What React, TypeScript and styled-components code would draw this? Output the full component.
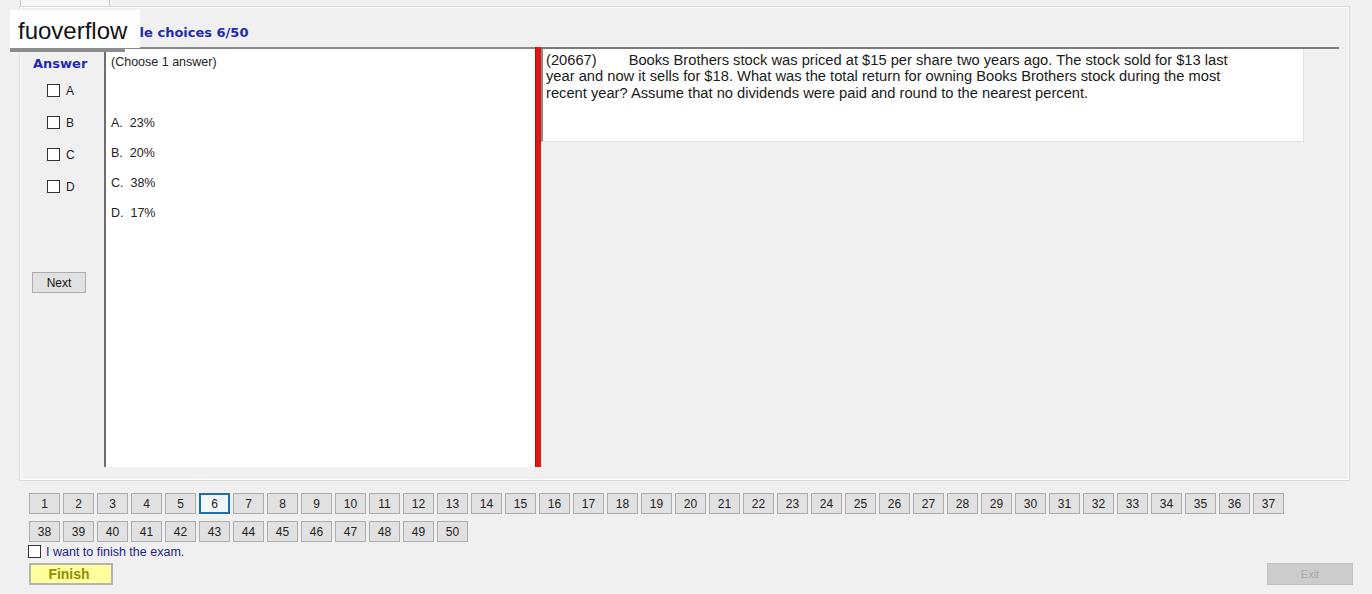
import styled, { createGlobalStyle } from "styled-components";

const GlobalStyle = createGlobalStyle`
  html, body {
    margin: 0;
    padding: 0;
    background: #f0f0f0;
  }
  * {
    box-sizing: border-box;
  }
`;

const Screen = styled.div`
  position: relative;
  width: 1372px;
  height: 594px;
  overflow: hidden;
  background: #f0f0f0;
  font-family: "Liberation Sans", Arial, sans-serif;
  color: #1a1a1a;
`;

const TabStrip = styled.div`
  height: 6px;
  padding-left: 20px;
  display: flex;
`;

const Tab = styled.div`
  width: 90px;
  height: 6px;
  border-left: 1px solid #c8c8c8;
  border-right: 1px solid #c8c8c8;
  background: #f6f6f6;
`;

const Frame = styled.div`
  margin-left: 19px;
  width: 1331px;
  height: 475px;
  border: 1px solid #d9d9d9;
  box-shadow: inset 1px 1px 0 #ffffff, inset -1px -1px 0 #ffffff;
  padding: 0 10px 13px 0;
  display: flex;
  flex-direction: column;
`;

const TitleRow = styled.div`
  height: 40px;
  padding-left: 73px;
  display: flex;
  align-items: flex-end;
  padding-bottom: 7px;
`;

const Title = styled.h1`
  margin: 0;
  font-family: "DejaVu Sans", Verdana, sans-serif;
  font-size: 13px;
  font-weight: 700;
  color: #1f2bb0;
`;

const Content = styled.div`
  flex: 1;
  display: flex;
`;

const AnswerCol = styled.div`
  width: 84px;
  display: flex;
  flex-direction: column;
  align-items: flex-start;
  padding: 9px 0 0 12px;
`;

const AnswerTitle = styled.div`
  margin-left: 1px;
  font-family: "DejaVu Sans", Verdana, sans-serif;
  font-size: 13px;
  font-weight: 700;
  color: #1f2bb0;
`;

const ChoiceList = styled.div`
  display: flex;
  flex-direction: column;
  gap: 19px;
  margin: 13px 0 0 15px;
`;

const Choice = styled.label`
  display: flex;
  align-items: center;
  gap: 6px;
  height: 13px;
  font-size: 12px;
  color: #222;
`;

const Box = styled.span`
  display: inline-block;
  width: 13px;
  height: 13px;
  border: 1px solid #333;
  background: #fff;
`;

const NextButton = styled.button`
  margin-top: 79px;
  width: 54px;
  height: 21px;
  background: #e1e1e1;
  border: 1px solid #adadad;
  font-family: "Liberation Sans", Arial, sans-serif;
  font-size: 12px;
  color: #111;
  padding: 0;
`;

const OptionsPane = styled.div`
  width: 431px;
  background: #fff;
  border-left: 2px solid #6e6e6e;
  border-top: 2px solid #8a8a8a;
  padding: 6px 0 0 5px;
  font-size: 12.5px;
  color: #222;
`;

const Options = styled.div`
  display: flex;
  flex-direction: column;
  gap: 16px;
  margin-top: 47px;
`;

const Option = styled.div`
  white-space: pre;
`;

const Splitter = styled.div`
  width: 6px;
  background: #dc1a14;
  border-left: 1px solid #b01010;
`;

const QuestionPane = styled.div`
  flex: 1;
  border-top: 2px solid #7a7a7a;
`;

const QuestionBox = styled.div`
  width: 763px;
  height: 93px;
  background: #fff;
  border-left: 2px solid #8a8a8a;
  border-bottom: 1px solid #e2e2e2;
  border-right: 1px solid #e2e2e2;
  padding: 3px 0 0 3px;
`;

const QuestionText = styled.p`
  margin: 0;
  width: 712px;
  font-size: 14.7px;
  line-height: 16.3px;
  color: #1a1a1a;
`;

const TabGap = styled.span`
  display: inline-block;
  width: 32px;
`;

const NumberGrid = styled.div`
  margin: 12px 0 0 29px;
  display: grid;
  grid-template-columns: repeat(37, 31px);
  grid-auto-rows: 21px;
  column-gap: 3px;
  row-gap: 7px;
`;

const NumButton = styled.button<{ $active?: boolean }>`
  padding: 0;
  font-family: "Liberation Sans", Arial, sans-serif;
  font-size: 12px;
  color: #222;
  background: ${(p) => (p.$active ? "#f2f6fa" : "#e1e1e1")};
  border: ${(p) => (p.$active ? "2px solid #1c6fae" : "1px solid #adadad")};
`;

const FinishCheck = styled.label`
  margin: 3px 0 0 28px;
  display: flex;
  align-items: center;
  gap: 5px;
  height: 14px;
  font-size: 12.5px;
  color: #1d1d8f;

  & > span {
    margin-top: -2px;
  }
`;

const BottomRow = styled.div`
  margin-top: 4px;
  padding: 0 19px 0 29px;
  display: flex;
  justify-content: space-between;
`;

const FinishButton = styled.button`
  width: 84px;
  height: 22px;
  padding: 0 4px 0 0;
  background: #ffff9e;
  border: 2px solid #b4b4b4;
  font-family: "Liberation Sans", Arial, sans-serif;
  font-size: 14px;
  font-weight: 700;
  color: #8f8f00;
`;

const ExitButton = styled.button`
  width: 86px;
  height: 22px;
  padding: 0;
  background: #cccccc;
  border: 1px solid #c2c2c2;
  font-family: "Liberation Sans", Arial, sans-serif;
  font-size: 11px;
  color: #a8a8a8;
`;

const Watermark = styled.div`
  position: absolute;
  left: 10px;
  top: 10px;
  width: 130px;
  height: 38px;
  background: #fff;
  padding: 7px 0 0 8px;
  font-family: "Liberation Sans", Arial, sans-serif;
  font-size: 24px;
  color: #111;
  &::after {
    content: "";
    position: absolute;
    left: 0;
    top: 38px;
    width: 115px;
    height: 4px;
    background: #8c8c8c;
  }
`;

const letters = ["A", "B", "C", "D"];
const options = ["A.  23%", "B.  20%", "C.  38%", "D.  17%"];
const numbers = Array.from({ length: 50 }, (_, i) => i + 1);

export default function App() {
  return (
    <>
      <GlobalStyle />
      <Screen>
        <TabStrip>
          <Tab />
        </TabStrip>
        <Frame>
          <TitleRow>
            <Title>Multiple choices 6/50</Title>
          </TitleRow>
          <Content>
            <AnswerCol>
              <AnswerTitle>Answer</AnswerTitle>
              <ChoiceList>
                {letters.map((l) => (
                  <Choice key={l}>
                    <Box />
                    {l}
                  </Choice>
                ))}
              </ChoiceList>
              <NextButton>Next</NextButton>
            </AnswerCol>
            <OptionsPane>
              <div>(Choose 1 answer)</div>
              <Options>
                {options.map((o) => (
                  <Option key={o}>{o}</Option>
                ))}
              </Options>
            </OptionsPane>
            <Splitter />
            <QuestionPane>
              <QuestionBox>
                <QuestionText>
                  (20667)
                  <TabGap />
                  Books Brothers stock was priced at $15 per share two years ago. The stock sold for $13 last
                  year and now it sells for $18. What was the total return for owning Books Brothers stock
                  during the most recent year? Assume that no dividends were paid and round to the nearest
                  percent.
                </QuestionText>
              </QuestionBox>
            </QuestionPane>
          </Content>
        </Frame>
        <NumberGrid>
          {numbers.map((n) => (
            <NumButton key={n} $active={n === 6}>
              {n}
            </NumButton>
          ))}
        </NumberGrid>
        <FinishCheck>
          <Box />
          I want to finish the exam.
        </FinishCheck>
        <BottomRow>
          <FinishButton>Finish</FinishButton>
          <ExitButton>Exit</ExitButton>
        </BottomRow>
        <Watermark>fuoverflow</Watermark>
      </Screen>
    </>
  );
}
